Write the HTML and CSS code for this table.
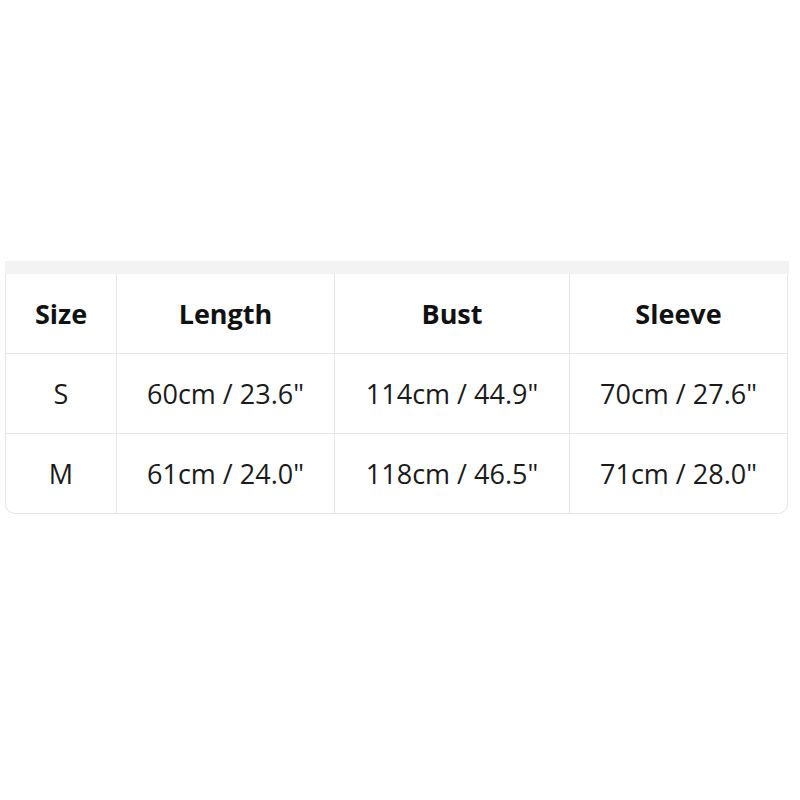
FILE: index.html
```html
<!DOCTYPE html>
<html>
<head>
<meta charset="utf-8">
<link rel="stylesheet" href="styles.css">
</head>
<body>
<div class="wrap">
  <div class="band"></div>
  <table class="sizes">
    <thead>
      <tr><th class="c1">Size</th><th class="c2">Length</th><th class="c3">Bust</th><th class="c4">Sleeve</th></tr>
    </thead>
    <tbody>
      <tr><td>S</td><td>60cm / 23.6"</td><td>114cm / 44.9"</td><td>70cm / 27.6"</td></tr>
      <tr><td>M</td><td>61cm / 24.0"</td><td>118cm / 46.5"</td><td>71cm / 28.0"</td></tr>
    </tbody>
  </table>
</div>
</body>
</html>
```
FILE: styles.css
```css
html, body { margin: 0; padding: 0; background: #fff; }
body { font-family: "Open Sans", "Segoe UI", "Noto Sans", sans-serif; color: #1a1a1a; }
.wrap { margin: 261px 11px 0 5px; }
.band { height: 13px; background: #f3f3f3; }
.sizes {
  width: 783px;
  margin-left: 0;
  border-collapse: separate;
  border-spacing: 0;
  border: 1px solid #e6e6e6;
  border-top: none;
  border-radius: 0 0 10px 10px;
  table-layout: fixed;
}
.sizes th, .sizes td {
  height: 79px;
  padding: 0;
  text-align: center;
  vertical-align: middle;
  font-size: 27px;
  border-right: 1px solid #e6e6e6;
  border-bottom: 1px solid #e6e6e6;
}
.sizes tr > :last-child { border-right: none; }
.sizes tbody tr:last-child td { border-bottom: none; }
.sizes th { font-weight: 700; color: #111; }
.c1 { width: 110px; }
.c2 { width: 217px; }
.c3 { width: 234px; }
```
